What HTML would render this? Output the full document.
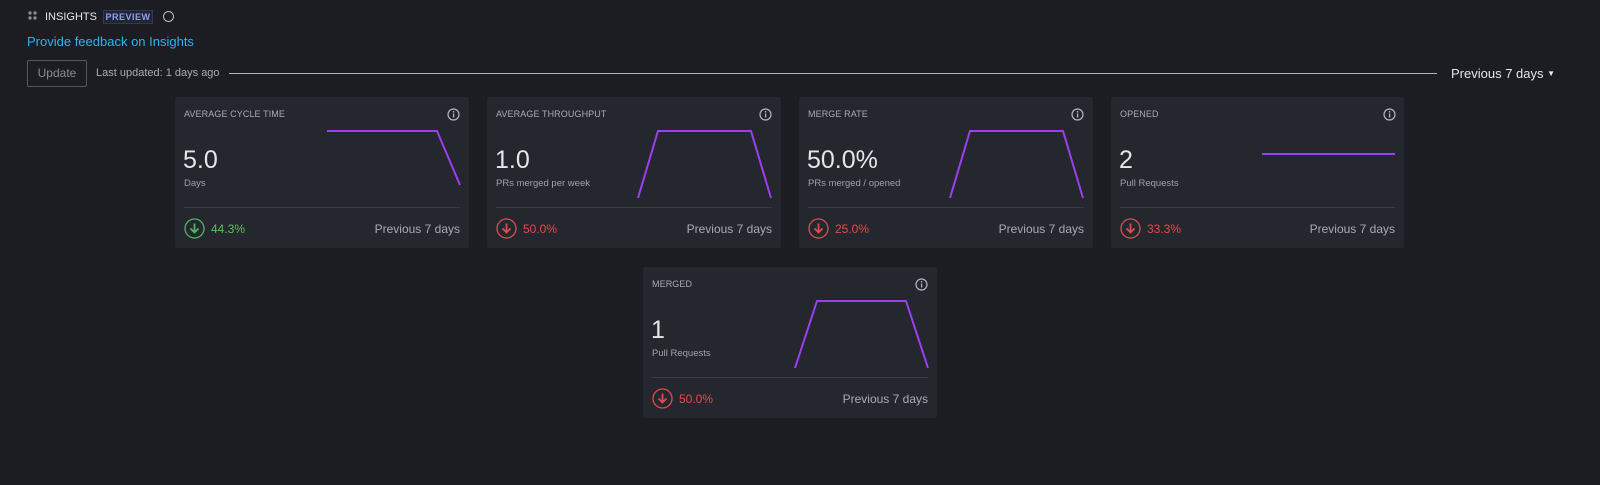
<!DOCTYPE html>
<html><head><style>
*{margin:0;padding:0;box-sizing:border-box}
body{width:1600px;height:485px;background:#1c1d23;font-family:"Liberation Sans",sans-serif;position:relative;overflow:hidden;color:#ddd}
.a{position:absolute}
.card{position:absolute;width:294px;height:151px;background:#25272e;border-radius:2px}
.t{position:absolute;left:9px;top:12px;font-size:9px;color:#a9abb1;letter-spacing:0.1px}
.v{position:absolute;left:8px;top:49px;font-size:25px;color:#e6e6e8}
.s{position:absolute;left:9px;top:81px;font-size:9.5px;color:#a0a2a8}
.d{position:absolute;left:9px;right:9px;top:110px;height:1px;background:#3a3c44}
.ic{position:absolute;left:9px;top:121px;width:21px;height:21px}
.p{position:absolute;left:36px;top:125px;font-size:12px}
.pr{position:absolute;right:9px;top:125px;font-size:12px;color:#a9abb1}
.i{position:absolute;left:272px;top:11px}
svg.c{position:absolute;left:0;top:0}
</style></head><body>
<div class="a" style="left:28px;top:11px;width:9px;height:9px">
<svg width="9" height="9" style="display:block"><circle cx="2" cy="2" r="1.7" fill="#888"/><circle cx="7" cy="2" r="1.7" fill="#888"/><circle cx="2" cy="7" r="1.7" fill="#888"/><circle cx="7" cy="7" r="1.7" fill="#888"/></svg></div>
<div class="a" style="left:45px;top:11px;font-size:11px;color:#e6e6e8">INSIGHTS</div>
<div class="a" style="left:103px;top:10px;width:50px;height:14px;background:#22253a;border:1px solid #33374f;color:#8fa0f0;font-size:9px;font-weight:bold;text-align:center;line-height:12px;letter-spacing:0.5px">PREVIEW</div>
<div class="a" style="left:163px;top:11px;width:11px;height:11px;border:1.5px solid #bbb;border-radius:50%"></div>
<div class="a" style="left:27px;top:34px;font-size:13px;color:#2fb3ea">Provide feedback on Insights</div>
<div class="a" style="left:27px;top:60px;width:60px;height:27px;border:1px solid #55575e;border-radius:2px;color:#8a8c92;font-size:12px;text-align:center;line-height:25px">Update</div>
<div class="a" style="left:96px;top:67px;font-size:11px;color:#a9abb1">Last updated: 1 days ago</div>
<div class="a" style="left:229px;top:73px;width:1208px;height:1px;background:#b5b6ba"></div>
<div class="a" style="left:1451px;top:66px;font-size:13px;color:#e6e6e8">Previous 7 days <span style="font-size:8px;position:relative;top:-2px">▼</span></div>

<div class="card" style="left:175px;top:97px">
<div class="t">AVERAGE CYCLE TIME</div>
<svg class="i" width="13" height="13"><circle cx="6.5" cy="6.5" r="5.5" fill="none" stroke="#b5b6ba" stroke-width="1.2"/><rect x="6" y="5.5" width="1.2" height="4" fill="#b5b6ba"/><circle cx="6.6" cy="3.8" r="0.8" fill="#b5b6ba"/></svg>
<svg class="c" width="294" height="151"><polyline points="152,34 262,34 285,88" fill="none" stroke="#9b3ff0" stroke-width="2"/></svg>
<div class="v">5.0</div><div class="s">Days</div><div class="d"></div>
<svg class="ic" width="21" height="21"><circle cx="10.5" cy="10.5" r="9.5" fill="none" stroke="#4cba5a" stroke-width="1.3"/><path d="M10.5 5.5v9M6.5 10.5l4 4 4-4" fill="none" stroke="#4cba5a" stroke-width="1.8"/></svg>
<div class="p" style="color:#57c163">44.3%</div><div class="pr">Previous 7 days</div>
</div>

<div class="card" style="left:487px;top:97px">
<div class="t">AVERAGE THROUGHPUT</div>
<svg class="i" width="13" height="13"><circle cx="6.5" cy="6.5" r="5.5" fill="none" stroke="#b5b6ba" stroke-width="1.2"/><rect x="6" y="5.5" width="1.2" height="4" fill="#b5b6ba"/><circle cx="6.6" cy="3.8" r="0.8" fill="#b5b6ba"/></svg>
<svg class="c" width="294" height="151"><polyline points="151,101 171,34 264,34 284,101" fill="none" stroke="#9b3ff0" stroke-width="2"/></svg>
<div class="v">1.0</div><div class="s">PRs merged per week</div><div class="d"></div>
<svg class="ic" width="21" height="21"><circle cx="10.5" cy="10.5" r="9.5" fill="none" stroke="#e5484d" stroke-width="1.3"/><path d="M10.5 5.5v9M6.5 10.5l4 4 4-4" fill="none" stroke="#e5484d" stroke-width="1.8"/></svg>
<div class="p" style="color:#e5484d">50.0%</div><div class="pr">Previous 7 days</div>
</div>

<div class="card" style="left:799px;top:97px">
<div class="t">MERGE RATE</div>
<svg class="i" width="13" height="13"><circle cx="6.5" cy="6.5" r="5.5" fill="none" stroke="#b5b6ba" stroke-width="1.2"/><rect x="6" y="5.5" width="1.2" height="4" fill="#b5b6ba"/><circle cx="6.6" cy="3.8" r="0.8" fill="#b5b6ba"/></svg>
<svg class="c" width="294" height="151"><polyline points="151,101 171,34 264,34 284,101" fill="none" stroke="#9b3ff0" stroke-width="2"/></svg>
<div class="v">50.0%</div><div class="s">PRs merged / opened</div><div class="d"></div>
<svg class="ic" width="21" height="21"><circle cx="10.5" cy="10.5" r="9.5" fill="none" stroke="#e5484d" stroke-width="1.3"/><path d="M10.5 5.5v9M6.5 10.5l4 4 4-4" fill="none" stroke="#e5484d" stroke-width="1.8"/></svg>
<div class="p" style="color:#e5484d">25.0%</div><div class="pr">Previous 7 days</div>
</div>

<div class="card" style="left:1111px;top:97px;width:293px">
<div class="t">OPENED</div>
<svg class="i" width="13" height="13"><circle cx="6.5" cy="6.5" r="5.5" fill="none" stroke="#b5b6ba" stroke-width="1.2"/><rect x="6" y="5.5" width="1.2" height="4" fill="#b5b6ba"/><circle cx="6.6" cy="3.8" r="0.8" fill="#b5b6ba"/></svg>
<svg class="c" width="294" height="151"><polyline points="151,57 284,57" fill="none" stroke="#9b3ff0" stroke-width="2"/></svg>
<div class="v">2</div><div class="s">Pull Requests</div><div class="d"></div>
<svg class="ic" width="21" height="21"><circle cx="10.5" cy="10.5" r="9.5" fill="none" stroke="#e5484d" stroke-width="1.3"/><path d="M10.5 5.5v9M6.5 10.5l4 4 4-4" fill="none" stroke="#e5484d" stroke-width="1.8"/></svg>
<div class="p" style="color:#e5484d">33.3%</div><div class="pr">Previous 7 days</div>
</div>

<div class="card" style="left:643px;top:267px">
<div class="t">MERGED</div>
<svg class="i" width="13" height="13"><circle cx="6.5" cy="6.5" r="5.5" fill="none" stroke="#b5b6ba" stroke-width="1.2"/><rect x="6" y="5.5" width="1.2" height="4" fill="#b5b6ba"/><circle cx="6.6" cy="3.8" r="0.8" fill="#b5b6ba"/></svg>
<svg class="c" width="294" height="151"><polyline points="152,101 174,34 263,34 285,101" fill="none" stroke="#9b3ff0" stroke-width="2"/></svg>
<div class="v">1</div><div class="s">Pull Requests</div><div class="d"></div>
<svg class="ic" width="21" height="21"><circle cx="10.5" cy="10.5" r="9.5" fill="none" stroke="#e5484d" stroke-width="1.3"/><path d="M10.5 5.5v9M6.5 10.5l4 4 4-4" fill="none" stroke="#e5484d" stroke-width="1.8"/></svg>
<div class="p" style="color:#e5484d">50.0%</div><div class="pr">Previous 7 days</div>
</div>
</body></html>
